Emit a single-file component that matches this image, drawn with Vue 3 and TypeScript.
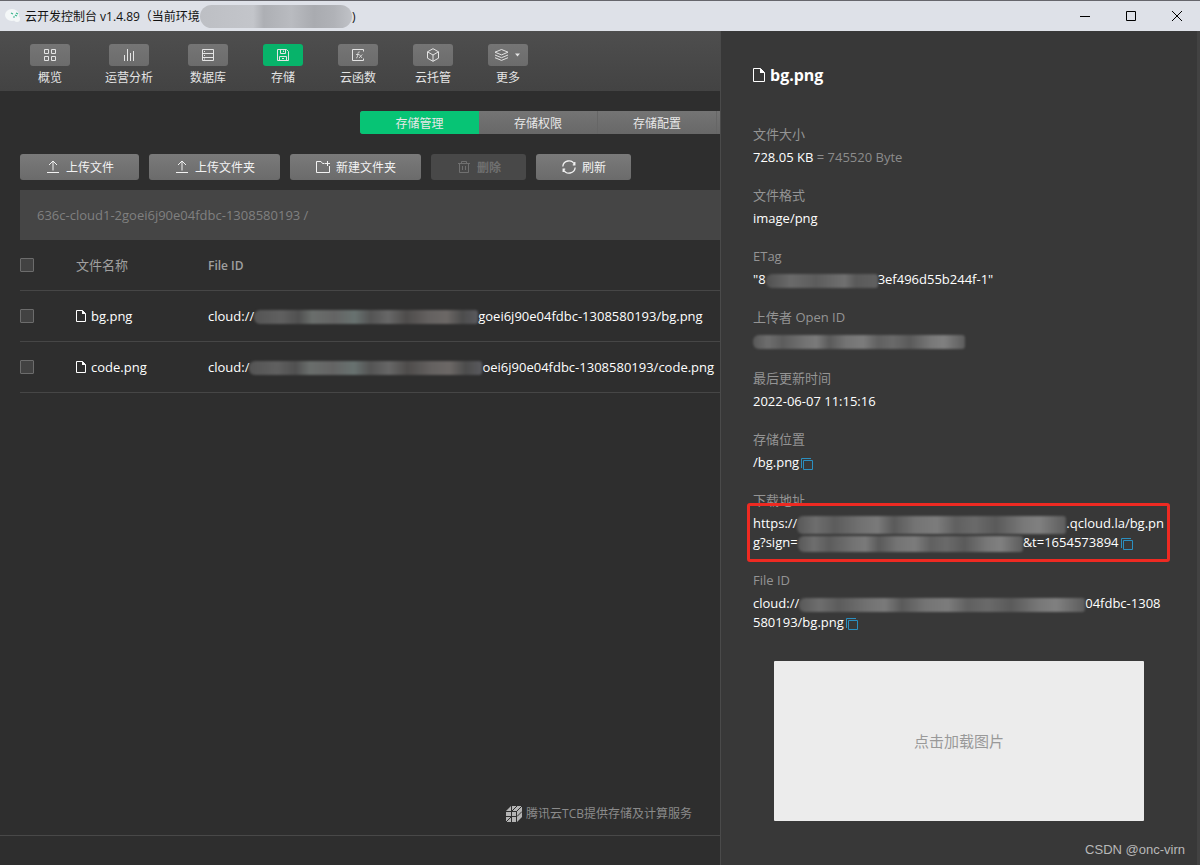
<script setup lang="ts">
import { ref } from 'vue'

interface NavItem { id: string; label: string }
interface FileRow { name: string; prefix: string; suffix: string; mask: string }

const navItems: NavItem[] = [
  { id: 'overview', label: '概览' },
  { id: 'analysis', label: '运营分析' },
  { id: 'database', label: '数据库' },
  { id: 'storage', label: '存储' },
  { id: 'function', label: '云函数' },
  { id: 'hosting', label: '云托管' },
  { id: 'more', label: '更多' },
]
const activeNav = ref('storage')

const tabs: string[] = ['存储管理', '存储权限', '存储配置']
const activeTab = ref('存储管理')

const files: FileRow[] = [
  { name: 'bg.png', prefix: 'cloud://', suffix: 'goei6j90e04fdbc-1308580193/bg.png', mask: 'mask-row-a' },
  { name: 'code.png', prefix: 'cloud:/', suffix: 'oei6j90e04fdbc-1308580193/code.png', mask: 'mask-row-b' },
]
const selected = ref<string[]>([])
</script>

<template>
  <div class="window">
    <header class="titlebar">
      <svg class="app-icon" viewBox="0 0 16 16" aria-hidden="true">
        <ellipse cx="7" cy="7" rx="7" ry="6" fill="#f4f7f8" />
        <circle cx="12" cy="11" r="3" fill="#f4f7f8" />
        <path d="M6 5l2 1M8 9h2M11 5l2 1M10 7l2 1" stroke="#37b58b" stroke-width="1.2" fill="none" />
      </svg>
      <span class="window-title">云开发控制台 v1.4.89（当前环境</span>
      <span class="title-mask"></span>
      <span class="window-title">)</span>
      <div class="window-controls">
        <button type="button" aria-label="最小化">
          <svg viewBox="0 0 12 12"><path d="M1 6.5h10" /></svg>
        </button>
        <button type="button" aria-label="最大化">
          <svg viewBox="0 0 12 12"><path d="M1.5 1.5h9v9h-9z" /></svg>
        </button>
        <button type="button" aria-label="关闭">
          <svg viewBox="0 0 12 12"><path d="M1 1l10 10M11 1L1 11" /></svg>
        </button>
      </div>
    </header>

    <div class="body">
      <main class="main">
        <nav class="toolbar">
          <button
            v-for="item in navItems"
            :key="item.id"
            type="button"
            class="nav-item"
            :class="{ active: item.id === activeNav }"
            @click="activeNav = item.id"
          >
            <span class="nav-box">
              <svg v-if="item.id === 'overview'" viewBox="0 0 14 14">
                <path d="M1.5 1.5h4v4h-4zM8.5 1.5h4v4h-4zM1.5 8.5h4v4h-4zM8.5 8.5h4v4h-4z" />
              </svg>
              <svg v-else-if="item.id === 'analysis'" viewBox="0 0 14 14">
                <path d="M2.5 7v6M5.5 1v12M8.5 5v8M11.5 3v10" />
              </svg>
              <svg v-else-if="item.id === 'database'" viewBox="0 0 14 14">
                <path d="M1.5 1.5h11v11h-11zM1.5 5.5h11M1.5 9.5h11M3 3.5h1M3 7.5h1M3 11h1" />
              </svg>
              <svg v-else-if="item.id === 'storage'" viewBox="0 0 14 14">
                <path d="M1.5 1.5h9l2 2v9h-11zM4.5 1.5v4h5v-4M7.5 2.5v1.5M3.5 12.5v-4h7v4M6 10.5h2" />
              </svg>
              <svg v-else-if="item.id === 'function'" viewBox="0 0 14 14">
                <path d="M12.5 3.5v-2h-11v11h11v-2" />
                <path class="thin" d="M8.8 4c-1.5-.5-1.8.6-2 2.500s-.6 3.800-1.800 3.400M5 6.500h3.200M8.300 6.500l2.700 3.500M11.300 6.500L8 10" />
              </svg>
              <svg v-else-if="item.id === 'hosting'" viewBox="0 0 14 14">
                <path d="M7 .7l5.5 3.1v6.4L7 13.3l-5.5-3.1V3.8zM1.5 3.8L7 7l5.5-3.2M7 7v6.3" />
              </svg>
              <svg v-else class="stack" viewBox="0 0 28 14">
                <path d="M7.5 1.5l6.500 2.700-6.500 2.700L1 4.200zM1 7l6.500 2.700L14 7M1 9.700l6.500 2.700L14 9.700" />
                <path d="M21 5.500h5l-2.500 3z" class="solid" />
              </svg>
            </span>
            <span class="nav-label">{{ item.label }}</span>
          </button>
        </nav>

        <div class="tabs" role="tablist">
          <button
            v-for="tab in tabs"
            :key="tab"
            type="button"
            role="tab"
            class="tab"
            :class="{ active: tab === activeTab }"
            :aria-selected="tab === activeTab"
            @click="activeTab = tab"
          >{{ tab }}</button>
        </div>

        <div class="actions">
          <button type="button" class="action">
            <svg viewBox="0 0 14 14"><path d="M7 10.5V1.5M3 5l4-4 4 4M1 12.5h12" /></svg>上传文件
          </button>
          <button type="button" class="action">
            <svg viewBox="0 0 14 14"><path d="M7 10.5V1.5M3 5l4-4 4 4M1 12.5h12" /></svg>上传文件夹
          </button>
          <button type="button" class="action">
            <svg viewBox="0 0 14 14"><path d="M8.5 3.5h-2l-1.5-2H.5v11h13V6M11.5 1v5M9 3.5h5" /></svg>新建文件夹
          </button>
          <button type="button" class="action" disabled>
            <svg viewBox="0 0 14 14"><path d="M1 3.5h12M4.5 3.5v-2h5v2M2.5 3.5v9h9v-9M5.5 6v4M8.5 6v4" /></svg>删除
          </button>
          <button type="button" class="action">
            <svg viewBox="0 0 14 14" class="bold"><path d="M.8 6.5A6.200 6.200 0 0 1 12.500 4.300M13.200 7.500A6.200 6.200 0 0 1 1.500 9.700M12.800 2v2.800h-2M1.200 12V9.200h2" /></svg>刷新
          </button>
        </div>

        <div class="path-bar">636c-cloud1-2goei6j90e04fdbc-1308580193 /</div>

        <table class="files">
          <thead>
            <tr>
              <th class="col-check"><input type="checkbox" aria-label="全选" /></th>
              <th class="col-name">文件名称</th>
              <th class="col-id">File ID</th>
            </tr>
          </thead>
          <tbody>
            <tr v-for="file in files" :key="file.name">
              <td><input v-model="selected" type="checkbox" :value="file.name" :aria-label="file.name" /></td>
              <td>
                <span class="file-name">
                  <svg viewBox="0 0 10 12"><path d="M.5.5h6l3 3v8h-9z" /><path class="fold" d="M6 0l4 4H6z" /></svg>{{ file.name }}
                </span>
              </td>
              <td>
                <span class="line">{{ file.prefix }}<i class="mask" :class="file.mask"></i>{{ file.suffix }}</span>
              </td>
            </tr>
          </tbody>
        </table>

        <div class="provider">
          <svg viewBox="0 0 16 16" aria-hidden="true">
            <path d="M5 0h11v11l-5 5H0V5z" fill="#b4b4b4" />
            <path d="M0 5.5h11M10.500 5.500V16M10.500 5.500L16 0M5.500 0v16M0 10.500h11l5-5M0 16L5.500 10.500M5.500 5.500L11 0" fill="none" stroke="#2e2e2e" />
          </svg>
          <span>腾讯云TCB提供存储及计算服务</span>
        </div>
        <footer class="status"></footer>
      </main>

      <aside class="drawer">
        <h1>
          <svg viewBox="0 0 12 14"><path d="M.5.5h7l4 4v9H.5z" /><path class="fold" d="M7 0l5 5H7z" /></svg>bg.png
        </h1>
        <dl>
          <div class="field">
            <dt>文件大小</dt>
            <dd>728.05 KB <span class="muted">= 745520 Byte</span></dd>
          </div>
          <div class="field">
            <dt>文件格式</dt>
            <dd>image/png</dd>
          </div>
          <div class="field">
            <dt>ETag</dt>
            <dd>"8<i class="mask soft mask-etag"></i>3ef496d55b244f-1"</dd>
          </div>
          <div class="field">
            <dt>上传者 Open ID</dt>
            <dd><i class="mask soft mask-openid"></i></dd>
          </div>
          <div class="field">
            <dt>最后更新时间</dt>
            <dd>2022-06-07 11:15:16</dd>
          </div>
          <div class="field">
            <dt>存储位置</dt>
            <dd>/bg.png<button type="button" class="copy" aria-label="复制"><svg viewBox="0 0 12 12"><path d="M2.5 2.5h9v9h-9zM.5 10V.5H10" /></svg></button></dd>
          </div>
          <div class="field highlighted">
            <dt>下载地址</dt>
            <dd>
              <span class="line">https://<i class="mask soft mask-url-a"></i>.qcloud.la/bg.pn</span>
              <span class="line">g?sign=<i class="mask soft mask-url-b"></i>&amp;t=1654573894<button type="button" class="copy" aria-label="复制"><svg viewBox="0 0 12 12"><path d="M2.5 2.5h9v9h-9zM.5 10V.5H10" /></svg></button></span>
            </dd>
          </div>
          <div class="field">
            <dt>File ID</dt>
            <dd>
              <span class="line">cloud://<i class="mask soft mask-file"></i>04fdbc-1308</span>
              <span class="line">580193/bg.png<button type="button" class="copy" aria-label="复制"><svg viewBox="0 0 12 12"><path d="M2.5 2.5h9v9h-9zM.5 10V.5H10" /></svg></button></span>
            </dd>
          </div>
        </dl>
        <button type="button" class="preview">点击加载图片</button>
        <span class="watermark">CSDN @onc-virn</span>
      </aside>
    </div>
  </div>
</template>

<style>
body {
  margin: 0;
  background: #2e2e2e;
}
</style>

<style scoped>
.window {
  display: flex;
  flex-direction: column;
  min-height: 100vh;
  color: #fff;
  font: 13px/19px "Open Sans", "Noto Sans CJK SC", sans-serif;
}
.window * {
  box-sizing: border-box;
}
button {
  margin: 0;
  padding: 0;
  border: 0;
  background: none;
  color: inherit;
  font: inherit;
}
svg {
  flex: none;
  fill: none;
  stroke: currentColor;
}

.titlebar {
  display: flex;
  align-items: center;
  height: 31px;
  padding-left: 5px;
  border-top: 1px solid #66666c;
  background: #dee1e8;
  color: #111;
}
.app-icon {
  width: 16px;
  height: 16px;
  margin-right: 4px;
  stroke: none;
}
.window-title {
  font-size: 12px;
  white-space: nowrap;
}
.title-mask {
  width: 152px;
  height: 23px;
  border-radius: 12px;
  background: linear-gradient(90deg, #bdbfc4, #c3c5ca 35%, #adafb4 42%, #b9bbc0 60%, #a9abb0 75%, #b0b2b7 88%, #c0c2c7);
}
.window-controls {
  display: flex;
  margin-left: auto;
}
.window-controls button {
  display: grid;
  place-items: center;
  width: 46px;
  height: 30px;
}
.window-controls svg {
  width: 12px;
  height: 12px;
  stroke: #000;
}

.body {
  display: grid;
  flex: 1;
  grid-template-columns: minmax(0, 3fr) minmax(0, 2fr);
}
.main {
  display: flex;
  flex-direction: column;
  overflow: hidden;
  background: #2e2e2e;
}
.toolbar {
  display: flex;
  gap: 35px;
  height: 60px;
  padding: 13px 30px 0;
  background: linear-gradient(#4e4e4e, #434343);
}
.nav-item {
  display: flex;
  flex-direction: column;
  align-items: center;
  min-width: 40px;
  color: #e4e4e4;
}
.nav-box {
  display: grid;
  place-items: center;
  width: 40px;
  height: 22px;
  border-radius: 3px;
  background: linear-gradient(#757575, #6c6c6c);
}
.nav-item.active .nav-box {
  background: #07b36a;
}
.nav-box svg {
  width: 14px;
  height: 14px;
}
.nav-box .stack {
  width: 28px;
}
.thin {
  stroke-width: 0.8;
}
.solid {
  fill: currentColor;
  stroke: none;
}
.nav-label {
  margin-top: 3px;
  font-size: 12px;
  line-height: 18px;
  white-space: nowrap;
}

.tabs {
  display: flex;
  height: 23px;
  margin: 20px 0 0 50%;
  border-radius: 3px 0 0 3px;
  background: linear-gradient(#747474, #686868);
  overflow: hidden;
}
.tab {
  width: 119px;
  flex: none;
  padding-top: 2px;
  border-right: 1px solid #666;
  color: #e8e8e8;
  font-size: 12px;
}
.tab.active {
  border-right: 0;
  background: #07c475;
}

.actions {
  display: flex;
  gap: 10px;
  margin: 20px 0 0 20px;
}
.action {
  display: flex;
  align-items: center;
  gap: 6px;
  height: 26px;
  padding: 0 25px 0 26px;
  border-radius: 3px;
  background: linear-gradient(#7a7a7a, #6b6b6b);
  color: #f2f2f2;
  font-size: 12px;
  white-space: nowrap;
}
.action svg {
  width: 14px;
  height: 14px;
}
.action .bold {
  stroke-width: 1.3;
}
.action:disabled {
  background: #484848;
  color: #707070;
  font-weight: 700;
}

.path-bar {
  display: flex;
  align-items: center;
  height: 50px;
  margin: 10px 0 0 20px;
  padding-left: 17px;
  background: #454545;
  color: #808080;
  white-space: nowrap;
}

.files {
  width: calc(100% - 20px);
  margin-left: 20px;
  border-spacing: 0;
  table-layout: fixed;
}
.files th,
.files td {
  height: 51px;
  padding: 0;
  border-bottom: 1px solid #464646;
  text-align: left;
}
.files th {
  color: #a0a0a0;
  font-weight: 400;
}
.files .col-check {
  width: 56px;
}
.files .col-name {
  width: 132px;
}
.files .col-id {
  font-size: 12px;
  font-weight: 600;
}
.files input {
  display: block;
  width: 14px;
  height: 14px;
  margin: 0;
  border: 1px solid #6c6c6c;
  border-radius: 1px;
  background: #424242;
  appearance: none;
}
.files input:checked {
  background: #07c475;
}
.file-name {
  display: flex;
  align-items: center;
  gap: 5px;
}
.file-name svg {
  width: 10px;
  height: 12px;
}
.fold {
  fill: currentColor;
  stroke: none;
}
.line {
  display: block;
  height: 19px;
  white-space: nowrap;
}

.mask {
  display: inline-block;
  height: 14px;
  margin: -4px 0;
  border-radius: 6px 3px 3px 6px;
  background: linear-gradient(90deg, #545454, #606060 12%, #505050 20%, #6a6e6c 26%, #646464 36%, #687270 45%, #545454 52%, #676767 60%, #4e4c4b 68%, #646160 78%, #6c6866 86%, #4c4c4c 93%, #5a5a5e);
  filter: blur(1px);
  vertical-align: middle;
}
.mask.soft {
  background: linear-gradient(90deg, #585858, #6e6e6e 7%, #5c5c5c 14%, #727272 24%, #7a7a7a 30%, #5a5a5a 36%, #747474 44%, #7c7c7c 52%, #606060 59%, #6a6a6a 66%, #5a5a5a 74%, #787878 84%, #808080 90%, #5c5c5c);
}
.mask-row-a {
  width: 224px;
}
.mask-row-b {
  width: 233px;
}
.mask.mask-etag {
  width: 112px;
  background: linear-gradient(90deg, #505050, #6a6a6a 22%, #5c5c5c 45%, #707070 70%, #5a5a5a 80%, #606060);
}
.mask-openid {
  width: 212px;
}
.mask-url-a {
  width: 269px;
  height: 18px;
}
.mask-url-b {
  width: 225px;
  height: 16px;
}
.mask-file {
  width: 286px;
}

.provider {
  display: flex;
  align-items: center;
  justify-content: flex-end;
  gap: 4px;
  margin-top: auto;
  padding: 0 28px 12px 0;
  color: #8b8b8b;
  font-size: 12px;
}
.provider svg {
  width: 16px;
  height: 16px;
  stroke: none;
}
.status {
  height: 30px;
  border-top: 1px solid #484848;
}

.drawer {
  position: relative;
  padding: 34px 32px 40px;
  border-left: 1px solid #4a4a4a;
  border-right: 3px solid #424242;
  background: #383838;
}
h1 {
  display: flex;
  align-items: center;
  gap: 5px;
  margin: 0 0 40px;
  font-size: 16px;
  font-weight: 700;
  line-height: 20px;
}
h1 svg {
  width: 12px;
  height: 14px;
}
dl {
  margin: 0;
}
.field {
  position: relative;
  margin-bottom: 19px;
}
dt {
  color: #949494;
  line-height: 18px;
}
dd {
  min-height: 19px;
  margin: 5px 0 0;
}
.muted {
  color: #8c8c8c;
}
.copy {
  display: inline-block;
  width: 12px;
  height: 12px;
  margin-left: 2px;
  color: #2b8fc0;
  vertical-align: -3px;
}
.copy svg {
  display: block;
  width: 12px;
  height: 12px;
}
.highlighted::after {
  content: "";
  position: absolute;
  inset: 12px -5px -10px -6px;
  border: 3px solid #ee2a22;
  border-radius: 3px;
  pointer-events: none;
}
.preview {
  display: block;
  width: 370px;
  max-width: 100%;
  height: 160px;
  margin: 29px auto 0;
  border-radius: 1px;
  background: #ececec;
  color: #999;
  font-size: 15px;
}
.watermark {
  position: absolute;
  right: 12px;
  bottom: 6px;
  color: #b8b8b8;
  font: 13px/19px "Liberation Sans", Arial, sans-serif;
}
</style>
